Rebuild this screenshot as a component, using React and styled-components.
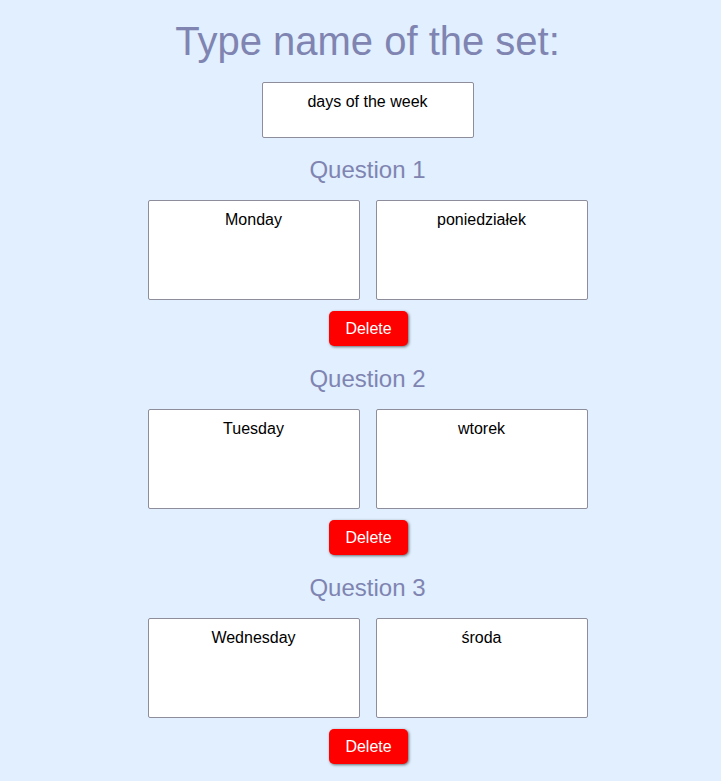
import React from "react";
import styled, { createGlobalStyle } from "styled-components";

const Global = createGlobalStyle`
  html, body {
    margin: 0;
    padding: 0;
    background: #e1effe;
    min-height: 100%;
  }
  body {
    font-family: "Liberation Sans", Arial, sans-serif;
  }
`;

const Page = styled.main`
  display: flex;
  flex-direction: column;
  align-items: center;
  padding: 18px 0 0 14px;
  min-height: 100vh;
  box-sizing: border-box;
`;

const Title = styled.h1`
  margin: 0;
  font-size: 40px;
  font-weight: normal;
  line-height: 46px;
  color: #7f84b1;
`;

const Field = styled.textarea`
  box-sizing: border-box;
  width: 212px;
  height: ${(p) => p.$h}px;
  margin: 0;
  padding: 10px 8px 8px;
  border: 1px solid #8d8d9c;
  border-radius: 2px;
  background: #ffffff;
  font-family: "Liberation Sans", Arial, sans-serif;
  font-size: 16px;
  line-height: 18px;
  color: #000;
  text-align: center;
  resize: none;
  outline: none;
`;

const NameField = styled(Field)`
  margin-top: 18px;
`;

const Section = styled.section`
  display: flex;
  flex-direction: column;
  align-items: center;
  margin-top: ${(p) => (p.$first ? 18 : 19)}px;
`;

const QuestionTitle = styled.h2`
  margin: 0;
  font-size: 24px;
  line-height: 28px;
  font-weight: normal;
  color: #7f84b1;
`;

const Pair = styled.div`
  display: flex;
  gap: 16px;
  margin-top: 16px;
`;

const DeleteButton = styled.button`
  margin: 11px 0 0 2px;
  width: 79px;
  height: 35px;
  border: none;
  border-radius: 5px;
  background: #ff0000;
  color: #ffffff;
  font-family: "Liberation Sans", Arial, sans-serif;
  font-size: 16px;
  box-shadow: 1px 1px 3px rgba(0, 0, 0, 0.55);
  cursor: pointer;
`;

const questions = [
  ["Monday", "poniedziałek"],
  ["Tuesday", "wtorek"],
  ["Wednesday", "środa"],
];

export default function App() {
  return (
    <>
      <Global />
      <Page>
        <Title>Type name of the set:</Title>
        <NameField $h={56} defaultValue="days of the week" />
        {questions.map(([a, b], i) => (
          <Section key={i} $first={i === 0}>
            <QuestionTitle>Question {i + 1}</QuestionTitle>
            <Pair>
              <Field $h={100} defaultValue={a} />
              <Field $h={100} defaultValue={b} />
            </Pair>
            <DeleteButton>Delete</DeleteButton>
          </Section>
        ))}
      </Page>
    </>
  );
}
